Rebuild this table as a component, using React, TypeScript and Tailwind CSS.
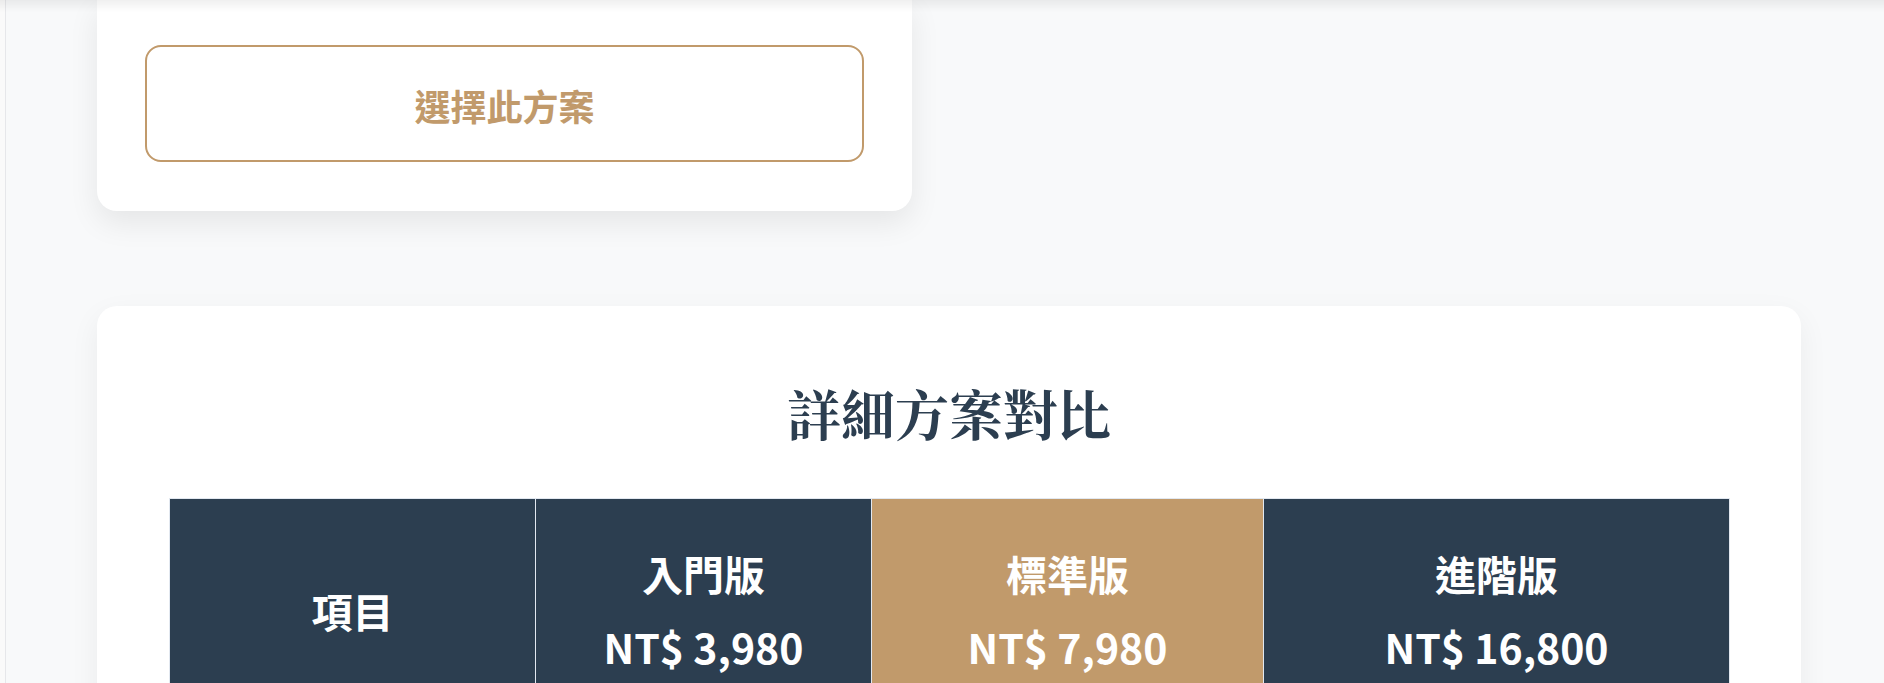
const plans = [
  { name: "入門版", price: "NT$ 3,980", featured: false },
  { name: "標準版", price: "NT$ 7,980", featured: true },
  { name: "進階版", price: "NT$ 16,800", featured: false },
];

const font = {
  fontFamily: '"Noto Sans CJK TC", "Noto Sans", sans-serif',
};

export default function App() {
  return (
    <div className="min-h-screen bg-[#fafafa] pl-[5px]" style={font}>
      {/* shadow cast by the header above */}
      <div className="pointer-events-none fixed inset-x-0 top-0 h-[12px] bg-gradient-to-b from-black/[0.06] to-transparent" />

      <div className="min-h-screen border-l border-[#e6e7ea] bg-[#f8f9fa] pl-[91px] pb-24">
        {/* tail of the last pricing card */}
        <div className="w-[815px] rounded-b-[20px] bg-white px-[48px] pt-[45px] pb-[49px] shadow-[0_12px_30px_rgba(0,0,0,0.08)]">
          <button className="flex h-[117px] w-full items-center justify-center rounded-[16px] border-[2.5px] border-[#c19a6b] bg-white pt-[3px] text-[36px] font-bold text-[#c19a6b]">
            選擇此方案
          </button>
        </div>

        {/* comparison table */}
        <section className="mt-[95px] w-[1704px] rounded-[20px] bg-white px-[72px] pt-[72px] pb-[72px] shadow-[0_10px_30px_rgba(0,0,0,0.06)]">
          <h2
            className="mb-[50px] text-center text-[54px] font-bold leading-[1.3] text-[#2c3e50]"
            style={{
              fontFamily:
                '"Noto Serif CJK TC", "Noto Sans CJK TC", serif',
            }}
          >
            詳細方案對比
          </h2>

          <table className="w-full table-fixed border-collapse">
            <colgroup>
              <col className="w-[366px]" />
              <col className="w-[336px]" />
              <col className="w-[392px]" />
              <col className="w-[466px]" />
            </colgroup>
            <thead>
              <tr>
                <th className="border border-[#e2e8f0] bg-[#2c3e50] text-center align-middle text-[41px] font-bold leading-[1.5] text-white">
                  項目
                </th>
                {plans.map((p) => (
                  <th
                    key={p.name}
                    className={
                      p.featured
                        ? "border border-[#e2e8f0] bg-[#c19a6b] pt-[44px] pb-[46px] text-center text-white"
                        : "border border-[#e2e8f0] bg-[#2c3e50] pt-[44px] pb-[46px] text-center text-white"
                    }
                  >
                    <div className="text-[41px] font-bold leading-[1.5]">
                      {p.name}
                    </div>
                    <div className="mt-[11px] text-[41px] font-bold leading-[1.5]">
                      {p.price}
                    </div>
                  </th>
                ))}
              </tr>
            </thead>
            <tbody>
              <tr>
                <td className="border border-[#e2e8f0] px-6 py-8 text-center text-[30px] text-[#2c3e50]">
                  &nbsp;
                </td>
                <td className="border border-[#e2e8f0]" />
                <td className="border border-[#e2e8f0]" />
                <td className="border border-[#e2e8f0]" />
              </tr>
            </tbody>
          </table>
        </section>
      </div>
    </div>
  );
}
